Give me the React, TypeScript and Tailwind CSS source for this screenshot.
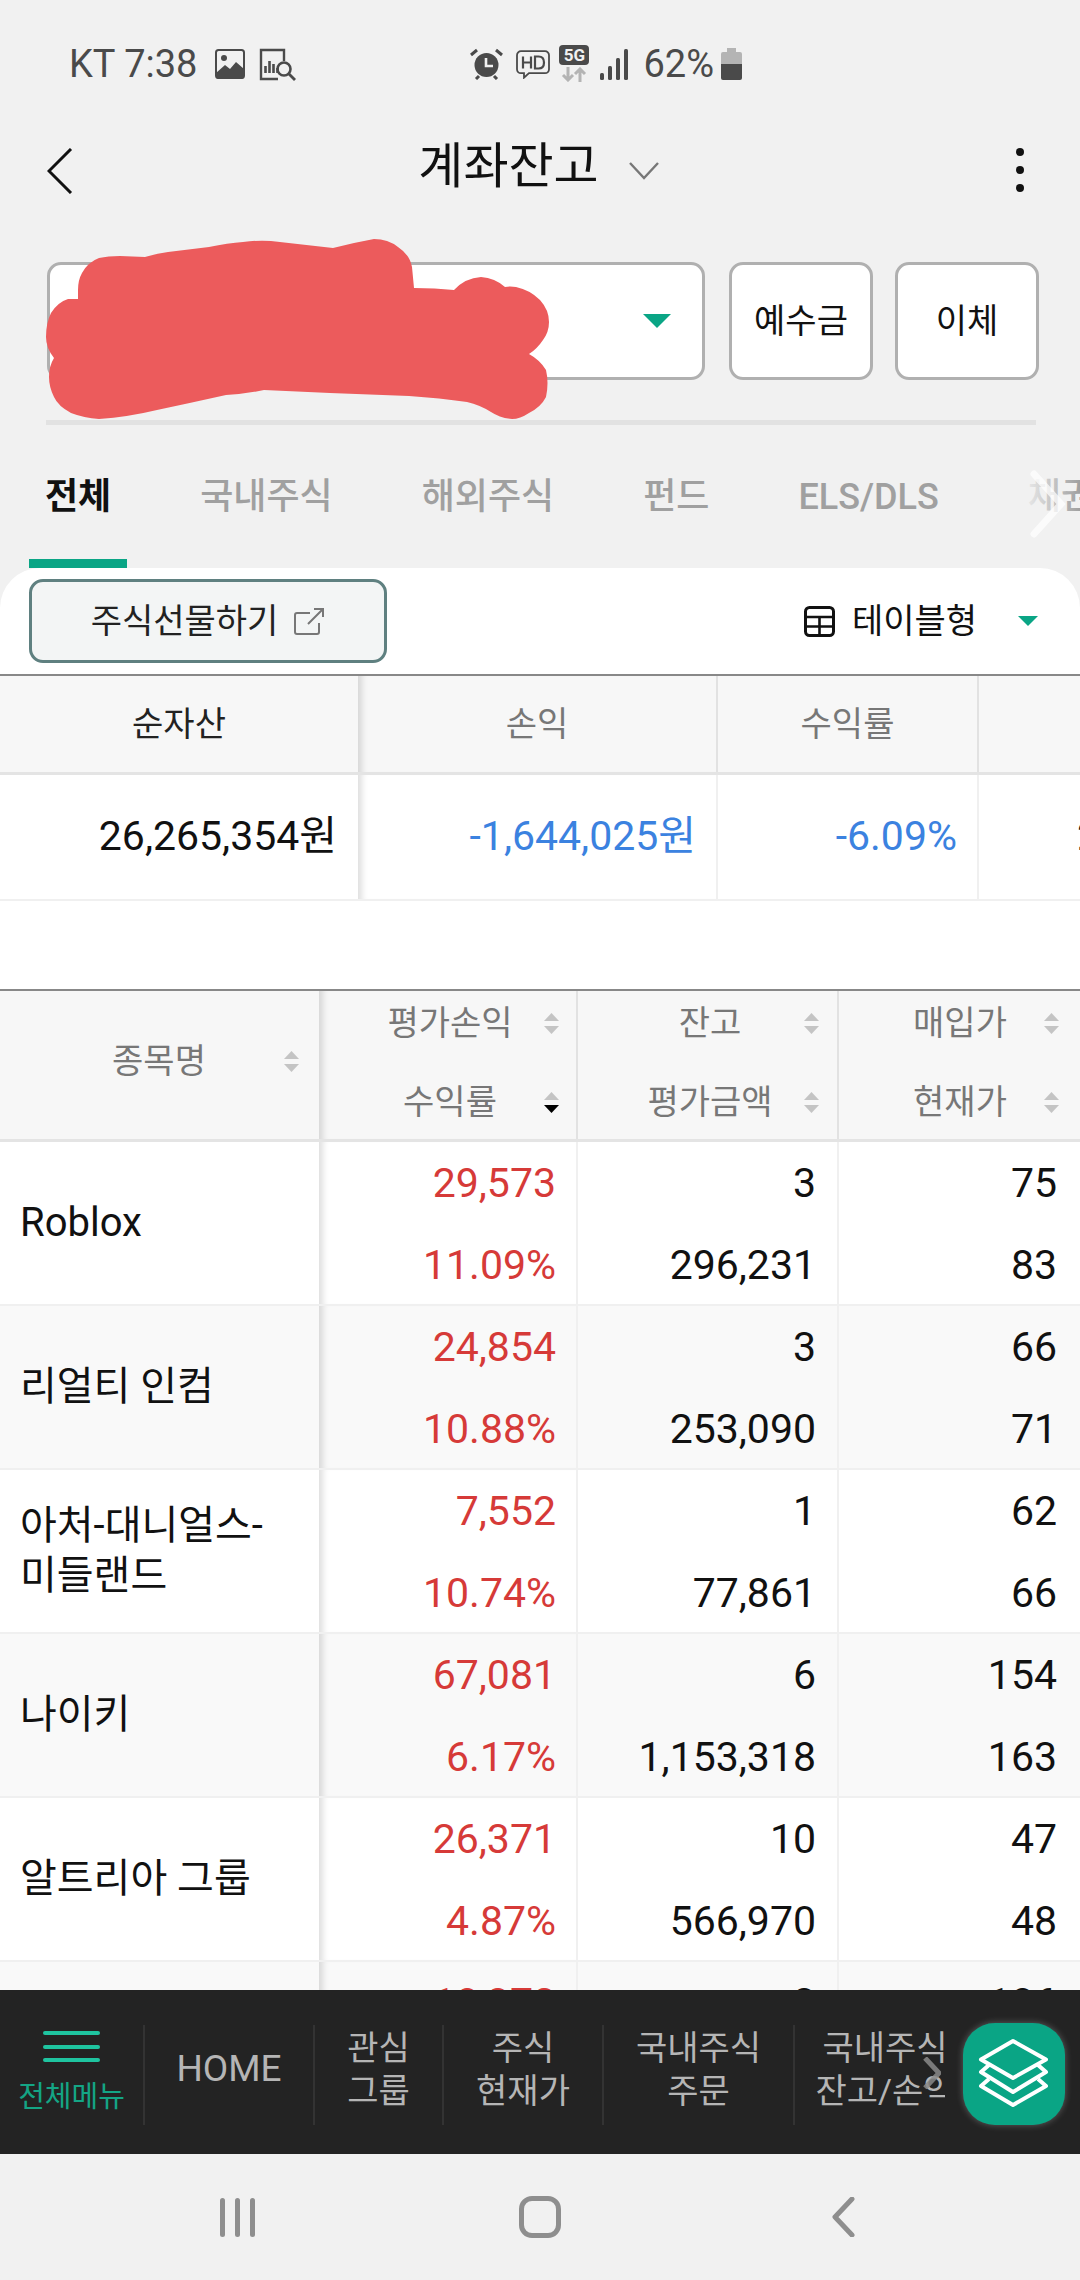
const rows = [
  { name: "Roblox", gain: "29,573", rate: "11.09%", qty: "3", value: "296,231", buy: "75", now: "83" },
  { name: "리얼티 인컴", gain: "24,854", rate: "10.88%", qty: "3", value: "253,090", buy: "66", now: "71" },
  { name: "아처-대니얼스-\n미들랜드", gain: "7,552", rate: "10.74%", qty: "1", value: "77,861", buy: "62", now: "66" },
  { name: "나이키", gain: "67,081", rate: "6.17%", qty: "6", value: "1,153,318", buy: "154", now: "163" },
  { name: "알트리아 그룹", gain: "26,371", rate: "4.87%", qty: "10", value: "566,970", buy: "47", now: "48" },
  { name: "", gain: "18,372", rate: "", qty: "3", value: "", buy: "186", now: "" },
];

const tabs = ["전체", "국내주식", "해외주식", "펀드", "ELS/DLS", "채권"];

const fixedShadow = "shadow-[inset_9px_0_6px_-5px_rgba(0,0,0,0.13)]";

function SortIcon({ active = false }: { active?: boolean }) {
  return (
    <svg width="15" height="21" viewBox="0 0 15 21" className="shrink-0">
      <path d="M7.5 0L15 8H0z" fill="#c4c4c4" />
      <path d="M0 13h15l-7.5 8z" fill={active ? "#000000" : "#c4c4c4"} />
    </svg>
  );
}

function StatusLeftIcons() {
  return (
    <>
      <svg width="30" height="30" viewBox="0 0 30 30" className="ml-[18px]">
        <rect x="1" y="1" width="28" height="28" rx="2.5" fill="#f1f1f1" stroke="#4a4a4a" strokeWidth="2" />
        <circle cx="9" cy="9" r="3" fill="#4a4a4a" />
        <path d="M1 24l9-8 5 4 6-7 8 7v7a3 3 0 0 1-3 3H4a3 3 0 0 1-3-3z" fill="#4a4a4a" />
      </svg>
      <svg width="37" height="33" viewBox="0 0 37 33" fill="none" className="ml-[14px]">
        <path d="M19 31H2V2h23v11" stroke="#4a4a4a" strokeWidth="2.4" />
        <path d="M6.5 25v-7M10.5 25v-12M14.5 25v-9M18.5 25v-5" stroke="#4a4a4a" strokeWidth="2.6" />
        <circle cx="25" cy="21" r="6.5" stroke="#4a4a4a" strokeWidth="2.6" />
        <path d="M30 26l6 6" stroke="#4a4a4a" strokeWidth="2.8" />
      </svg>
    </>
  );
}

function StatusRightIcons() {
  return (
    <>
      <svg width="33" height="32" viewBox="0 0 33 32" fill="none">
        <circle cx="16.5" cy="17" r="12" fill="#4a4a4a" />
        <path d="M16 10v8h7" stroke="#f1f1f1" strokeWidth="2.6" />
        <path d="M1 7l6-5M32 7l-6-5M6 31l3-3M27 31l-3-3" stroke="#4a4a4a" strokeWidth="3" />
      </svg>
      <svg width="34" height="29" viewBox="0 0 34 29" fill="none" className="ml-[13px]">
        <path d="M5 1.2h24a4 4 0 0 1 4 4v14a4 4 0 0 1-4 4H13l-5 4.5v-4.5H5a4 4 0 0 1-4-4v-14a4 4 0 0 1 4-4z" stroke="#4a4a4a" strokeWidth="1.8" />
        <path d="M7 6.5v12M15 6.5v12M7 12.5h8" stroke="#4a4a4a" strokeWidth="2.2" />
        <path d="M19 6.5h3.5c3.6 0 5.5 2.2 5.5 6s-1.9 6-5.5 6H19z" stroke="#4a4a4a" strokeWidth="2.2" />
      </svg>
      <div className="ml-[9px] flex w-[30px] flex-col items-center self-start">
        <div className="flex h-[20px] w-[30px] items-center justify-center rounded-[4px] bg-[#4a4a4a] text-[17px] leading-none font-bold text-[#f1f1f1]">
          5G
        </div>
        <svg width="26" height="15" viewBox="0 0 26 15" fill="none" className="mt-[2px]">
          <path d="M7 0v13M2 8l5 5 5-5" stroke="#b4b4b4" strokeWidth="3" />
          <path d="M19 15V2M14 7l5-5 5 5" stroke="#b4b4b4" strokeWidth="3" />
        </svg>
      </div>
      <svg width="28" height="31" viewBox="0 0 28 31" className="ml-[11px]">
        <rect x="0" y="24" width="4" height="7" rx="1.5" fill="#4a4a4a" />
        <rect x="8" y="17" width="4" height="14" rx="1.5" fill="#4a4a4a" />
        <rect x="16" y="9" width="4" height="22" rx="1.5" fill="#4a4a4a" />
        <rect x="24" y="0" width="4" height="31" rx="1.5" fill="#4a4a4a" />
      </svg>
      <span className="ml-[15px] text-[38px] leading-none text-[#4a4a4a]">62%</span>
      <svg width="21" height="32" viewBox="0 0 21 32" className="ml-[7px]">
        <path d="M6 0h9v4h4a2 2 0 0 1 2 2v10H0V6a2 2 0 0 1 2-2h4z" fill="#b4b4b4" />
        <path d="M0 16h21v14a2 2 0 0 1-2 2H2a2 2 0 0 1-2-2z" fill="#4a4a4a" />
      </svg>
    </>
  );
}

export default function App() {
  return (
    <div className="relative flex h-[2280px] w-[1080px] flex-col overflow-hidden bg-[#f1f1f1] font-[family-name:Roboto,'Noto_Sans_CJK_KR',sans-serif]">
      {/* status bar */}
      <div className="flex h-[128px] shrink-0 items-center pb-[0px] pl-[69px]">
        <span className="text-[38px] leading-none text-[#4a4a4a]">KT 7:38</span>
        <StatusLeftIcons />
        <div className="ml-[174px] flex items-center">
          <StatusRightIcons />
        </div>
      </div>

      {/* title */}
      <div className="relative flex h-[76px] shrink-0 items-center justify-center">
        <svg width="26" height="46" viewBox="0 0 26 46" fill="none" className="absolute top-[20px] left-[47px]">
          <path d="M24 1L2 23l22 22" stroke="#111111" strokeWidth="3" />
        </svg>
        <span className="ml-[-3px] text-[49px] leading-none text-[#111111]">계좌잔고</span>
        <svg width="30" height="18" viewBox="0 0 30 18" fill="none" className="mt-[10px] ml-[30px]">
          <path d="M1 1l14 15L29 1" stroke="#777777" strokeWidth="2.4" />
        </svg>
        <div className="absolute top-[20px] left-[1016px] flex flex-col gap-[10px]">
          <span className="size-[8px] rounded-full bg-[#111111]" />
          <span className="size-[8px] rounded-full bg-[#111111]" />
          <span className="size-[8px] rounded-full bg-[#111111]" />
        </div>
      </div>

      {/* account select */}
      <div className="mt-[58px] flex h-[118px] shrink-0 gap-[24px] pl-[47px]">
        <div className="flex w-[658px] items-center justify-end rounded-[14px] border-[3px] border-[#b0b0b0] bg-white pr-[31px]">
          <svg width="28" height="14" viewBox="0 0 28 14">
            <path d="M0 0h28L14 14z" fill="#0aa585" />
          </svg>
        </div>
        <button className="w-[144px] rounded-[14px] border-[3px] border-[#b0b0b0] bg-white text-[34px] text-[#111111]">예수금</button>
        <button className="ml-[-2px] w-[144px] rounded-[14px] border-[3px] border-[#b0b0b0] bg-white text-[34px] text-[#111111]">이체</button>
      </div>
      <div className="mt-[40px] ml-[46px] h-[5px] w-[990px] shrink-0 bg-[#e2e2e2]" />

      {/* tabs */}
      <div className="relative flex h-[143px] shrink-0 gap-[57px] overflow-hidden pl-[29px]">
        {tabs.map((tab, i) => (
          <div
            key={tab}
            className={
              i === 0
                ? "flex shrink-0 items-center border-b-[9px] border-[#0aa585] px-[16px] pt-[9px] text-[36px] font-bold text-[#111111]"
                : "flex shrink-0 items-center border-b-[9px] border-transparent px-[16px] pt-[9px] text-[36px] font-medium text-[#a0a0a0]"
            }
          >
            {tab}
          </div>
        ))}
        <div className="absolute top-0 right-0 h-full w-[60px] bg-gradient-to-r from-[#f1f1f1] to-transparent" />
        <svg width="36" height="68" viewBox="0 0 36 68" fill="none" className="absolute top-[45px] left-[1030px]">
          <path d="M4 4l27 30L4 64" stroke="#ffffff" strokeOpacity="0.7" strokeWidth="7" strokeLinecap="round" />
        </svg>
      </div>

      {/* white panel */}
      <div className="flex h-[1422px] shrink-0 flex-col overflow-hidden rounded-t-[40px] bg-white">
        <div className="flex h-[106px] shrink-0 items-start justify-between pt-[11px] pr-[42px] pl-[29px]">
          <button className="flex h-[84px] w-[358px] items-center justify-center gap-[16px] rounded-[14px] border-[3px] border-[#5f8080] bg-[#f3f5f5] text-[34px] text-[#222222]">
            주식선물하기
            <svg width="31" height="27" viewBox="0 0 31 27" fill="none">
              <path d="M16 5H3a2 2 0 0 0-2 2v17a2 2 0 0 0 2 2h20a2 2 0 0 0 2-2v-9" stroke="#777777" strokeWidth="2" />
              <path d="M14 16L29 1M20 1h9v8" stroke="#777777" strokeWidth="2" />
            </svg>
          </button>
          <div className="flex h-[84px] items-center">
            <svg width="31" height="31" viewBox="0 0 31 31" fill="none">
              <rect x="1.5" y="1.5" width="28" height="28" rx="4" stroke="#111111" strokeWidth="3" />
              <path d="M1.5 11h28M1.5 20.5h28M15.5 11v18" stroke="#111111" strokeWidth="2.6" />
            </svg>
            <span className="ml-[17px] text-[34px] text-[#111111]">테이블형</span>
            <svg width="20" height="10" viewBox="0 0 20 10" className="ml-[41px]">
              <path d="M0 0h20L10 10z" fill="#0aa585" />
            </svg>
          </div>
        </div>

        {/* summary table */}
        <div className="shrink-0 overflow-hidden border-t-2 border-[#888888]">
          <div className="grid h-[99px] grid-cols-[358px_360px_261px_260px] border-b-[3px] border-[#e4e4e4] bg-[#f7f7f7] text-[34px] text-[#777777]">
            <div className="flex items-center justify-center text-[#222222]">순자산</div>
            <div className={`flex items-center justify-center border-r-2 border-[#e2e2e2] ${fixedShadow}`}>손익</div>
            <div className="flex items-center justify-center border-r-2 border-[#e2e2e2]">수익률</div>
            <div />
          </div>
          <div className="grid h-[126px] grid-cols-[358px_360px_261px_260px] border-b-2 border-[#f0f0f0] text-[41px]">
            <div className="flex items-center justify-end pr-[21px] text-[#111111]">26,265,354원</div>
            <div className={`flex items-center justify-end border-r-2 border-[#f0f0f0] pr-[20px] text-[#3b82e0] ${fixedShadow}`}>-1,644,025원</div>
            <div className="flex items-center justify-end border-r-2 border-[#f0f0f0] pr-[20px] text-[#3b82e0]">-6.09%</div>
            <div className="flex items-center pl-[98px] whitespace-nowrap text-[#111111]">27,909,379원</div>
          </div>
        </div>

        {/* holdings table */}
        <div className="mt-[88px] shrink-0 border-t-2 border-[#888888]">
          <div className="grid h-[151px] grid-cols-[319px_259px_261px_241px] border-b-[3px] border-[#e4e4e4] bg-[#f7f7f7] text-[34px] text-[#777777]">
            <div className="flex items-center pb-[8px]">
              <span className="ml-[79px] w-[160px] text-center">종목명</span>
              <span className="ml-[45px] flex"><SortIcon /></span>
            </div>
            <div className={`flex flex-col gap-[15px] border-r-2 border-[#e2e2e2] ${fixedShadow}`}>
              <div className="flex h-[64px] items-center">
                <span className="ml-[51px] w-[160px] text-center">평가손익</span>
                <span className="ml-[14px] flex"><SortIcon /></span>
              </div>
              <div className="flex h-[64px] items-center">
                <span className="ml-[51px] w-[160px] text-center">수익률</span>
                <span className="ml-[14px] flex"><SortIcon active /></span>
              </div>
            </div>
            <div className="flex flex-col gap-[15px] border-r-2 border-[#e2e2e2]">
              <div className="flex h-[64px] items-center">
                <span className="ml-[52px] w-[160px] text-center">잔고</span>
                <span className="ml-[14px] flex"><SortIcon /></span>
              </div>
              <div className="flex h-[64px] items-center">
                <span className="ml-[52px] w-[160px] text-center">평가금액</span>
                <span className="ml-[14px] flex"><SortIcon /></span>
              </div>
            </div>
            <div className="flex flex-col gap-[15px]">
              <div className="flex h-[64px] items-center">
                <span className="ml-[41px] w-[160px] text-center">매입가</span>
                <span className="ml-[4px] flex"><SortIcon /></span>
              </div>
              <div className="flex h-[64px] items-center">
                <span className="ml-[41px] w-[160px] text-center">현재가</span>
                <span className="ml-[4px] flex"><SortIcon /></span>
              </div>
            </div>
          </div>

          {rows.map((row, i) => (
            <div
              key={row.gain}
              className={
                i % 2 === 1
                  ? "grid h-[164px] grid-cols-[319px_259px_261px_241px] border-b-2 border-[#f0f0f0] bg-[#f9f9f9] text-[41px] leading-[82px]"
                  : "grid h-[164px] grid-cols-[319px_259px_261px_241px] border-b-2 border-[#f0f0f0] bg-white text-[41px] leading-[82px]"
              }
            >
              <div className="flex items-center pl-[20px] text-[40px] leading-[50px] whitespace-pre-line text-[#111111]">{row.name}</div>
              <div className={`border-r-2 border-[#f0f0f0] pr-[20px] text-right text-[#d63a38] ${fixedShadow}`}>
                <div className="h-[82px]">{row.gain}</div>
                <div className="h-[80px]">{row.rate}</div>
              </div>
              <div className="border-r-2 border-[#f0f0f0] pr-[21px] text-right text-[#111111]">
                <div className="h-[82px]">{row.qty}</div>
                <div className="h-[80px]">{row.value}</div>
              </div>
              <div className="pr-[23px] text-right text-[#111111]">
                <div className="h-[82px]">{row.buy}</div>
                <div className="h-[80px]">{row.now}</div>
              </div>
            </div>
          ))}
        </div>
      </div>

      {/* quick menu bar */}
      <div className="relative h-[164px] shrink-0 bg-[#232323]">
        <div className="flex h-full w-[945px] overflow-hidden pt-[35px]">
          <div className="flex h-[100px] w-[145px] shrink-0 flex-col items-center border-r-2 border-[#333333]">
            <div className="flex w-[57px] flex-col gap-[9.5px] pt-[6px]">
              <span className="h-[4px] rounded-full bg-[#1fc4a0]" />
              <span className="h-[4px] rounded-full bg-[#1fc4a0]" />
              <span className="h-[4px] rounded-full bg-[#1fc4a0]" />
            </div>
            <span className="mt-[15px] text-[29px] leading-[40px] whitespace-nowrap text-[#14a585]">전체메뉴</span>
          </div>
          <div className="flex h-[100px] w-[170px] shrink-0 items-center justify-center border-r-2 border-[#333333] pb-[12px] text-[37px] text-[#b5b5b5]">HOME</div>
          <div className="flex h-[100px] w-[129px] shrink-0 items-center justify-center border-r-2 border-[#333333] pb-[10px] text-center text-[34px] leading-[43px] text-[#b5b5b5]">
            관심
            <br />
            그룹
          </div>
          <div className="flex h-[100px] w-[160px] shrink-0 items-center justify-center border-r-2 border-[#333333] pb-[10px] text-center text-[34px] leading-[43px] text-[#b5b5b5]">
            주식
            <br />
            현재가
          </div>
          <div className="flex h-[100px] w-[191px] shrink-0 items-center justify-center border-r-2 border-[#333333] pb-[10px] text-center text-[34px] leading-[43px] text-[#b5b5b5]">
            국내주식
            <br />
            주문
          </div>
          <div className="flex h-[100px] w-[180px] shrink-0 items-center justify-center pb-[10px] text-center text-[34px] leading-[43px] text-[#b5b5b5]">
            국내주식
            <br />
            잔고/손익
          </div>
        </div>
        <svg width="18" height="32" viewBox="0 0 18 32" fill="none" className="absolute top-[67px] left-[923px]">
          <path d="M2 1l14 15L2 31" stroke="#8a8a8a" strokeOpacity="0.85" strokeWidth="5" />
        </svg>
        <div className="absolute top-[33px] left-[963px] flex size-[102px] items-center justify-center rounded-[32px] bg-[#0aa585] shadow-[0_0_7px_rgba(255,255,255,0.28)]">
          <svg width="102" height="102" viewBox="0 0 102 102" fill="none">
            <path d="M50 18l33 18.5L50 55 18 36.5z" stroke="#ffffff" strokeWidth="4" strokeLinejoin="round" />
            <path d="M26 42l-8 7 32 20 33-20-8-7" stroke="#ffffff" strokeWidth="4" strokeLinejoin="round" />
            <path d="M26 56l-8 7 32 19 33-19-8-7" stroke="#ffffff" strokeWidth="4" strokeLinejoin="round" />
          </svg>
        </div>
      </div>

      {/* android nav */}
      <div className="flex h-[126px] shrink-0 items-center justify-center">
        <div className="flex w-[303px] justify-center gap-[10px]">
          <span className="h-[39px] w-[5px] rounded-full bg-[#8e8e8e]" />
          <span className="h-[39px] w-[5px] rounded-full bg-[#8e8e8e]" />
          <span className="h-[39px] w-[5px] rounded-full bg-[#8e8e8e]" />
        </div>
        <div className="flex w-[303px] justify-center">
          <span className="h-[42px] w-[42px] rounded-[13px] border-[5px] border-[#8e8e8e]" />
        </div>
        <div className="flex w-[303px] justify-center">
          <svg width="24" height="40" viewBox="0 0 24 40" fill="none">
            <path d="M21 2L4 20l17 18" stroke="#8e8e8e" strokeWidth="5" strokeLinecap="round" strokeLinejoin="round" />
          </svg>
        </div>
      </div>

      {/* red marker scribble over the account number */}
      <svg width="1080" height="2280" viewBox="0 0 1080 2280" className="pointer-events-none absolute top-0 left-0">
        <path
          d="M78 290Q78 280 82 273Q88 262 99 258Q108 256 120 256L145 257Q155 254 168 252L209 247Q228 243 243 242Q258 240 271 241L333 248Q352 243 374 239Q388 239 398 247Q410 255 412 267L414 288Q435 288 454 290Q465 278 481 277Q495 278 505 287Q510 286 516 287Q530 290 540 300Q549 310 549 322Q549 332 543 340Q537 349 529 354Q540 360 546 370Q549 383 546 397Q541 407 529 413Q520 419 512 419Q500 418 491 412Q480 405 467 402Q440 398 409 396L330 393L264 390Q245 394 226 395Q190 403 157 410Q128 417 99 419Q84 418 71 413Q58 406 54 397Q49 387 49 377Q49 366 54 358Q46 348 46 337Q46 323 51 313Q58 302 68 299L78 299z"
          fill="#ec5b5c"
        />
      </svg>
    </div>
  );
}
